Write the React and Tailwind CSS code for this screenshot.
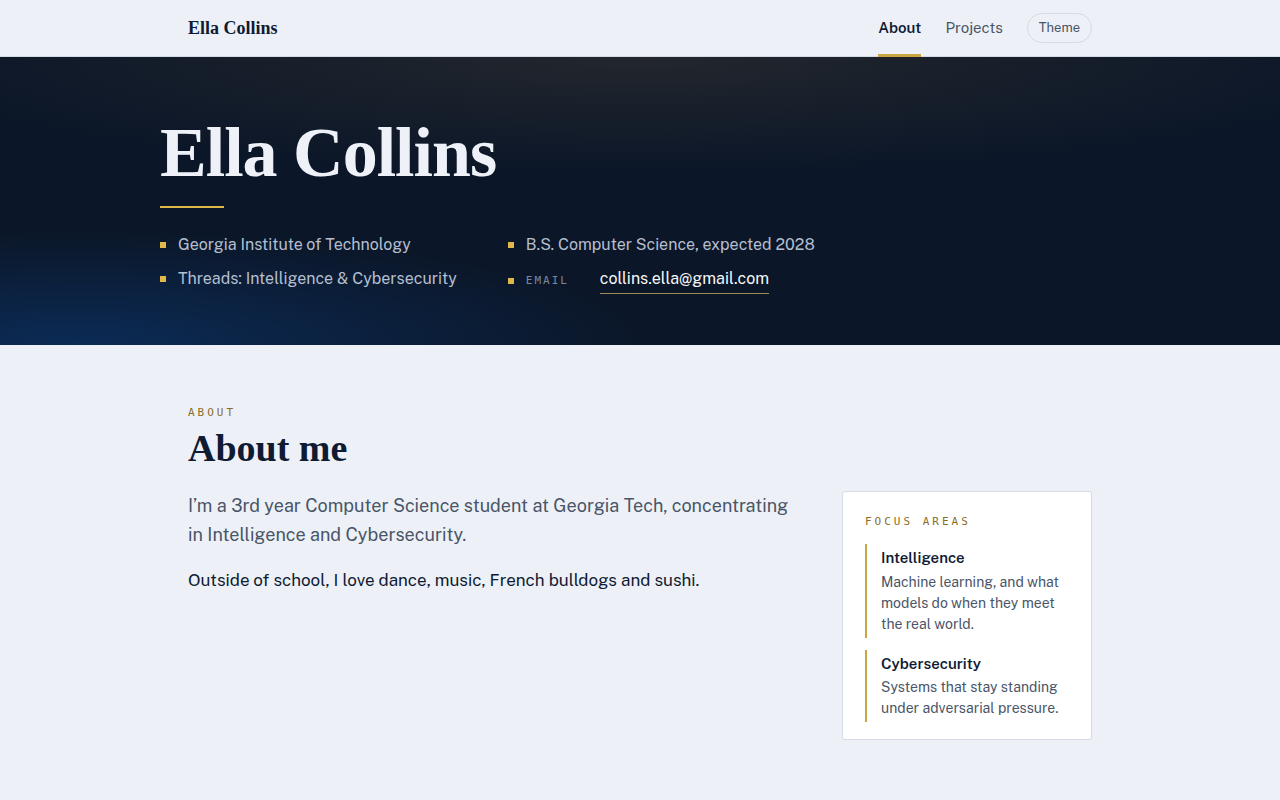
import React from 'react';

const sans = "font-['Public_Sans','Inter','Liberation_Sans',sans-serif]";
const serif = "font-['Liberation_Serif','DejaVu_Serif',serif]";
const mono = "font-['DejaVu_Sans_Mono','Liberation_Mono',monospace]";

function Bullet() {
  return <span className="h-[6px] w-[6px] shrink-0 bg-[#e0b84a]" />;
}

function HeroItem({ children }) {
  return (
    <li className="flex items-center gap-3 text-[16px] leading-6 text-[#b4bfd0]">
      <Bullet />
      {children}
    </li>
  );
}

function Focus({ title, children }) {
  return (
    <div className="border-l-2 border-[#c9a63f] py-[3px] pl-[14px]">
      <h3 className="text-[15px] font-semibold text-[#0f1b33]">{title}</h3>
      <p className="mt-[2px] text-[14px] leading-[21px] text-[#4a5568]">{children}</p>
    </div>
  );
}

export default function App() {
  return (
    <div className={`min-h-screen bg-[#edf1f7] ${sans}`}>
      <header className="h-[57px] border-b border-[#d5dbe4] bg-[#edf1f7]">
        <div className="mx-auto flex h-full max-w-[960px] items-center justify-between px-7">
          <a className={`${serif} text-[18px] font-bold text-[#0f1b33]`}>Ella Collins</a>
          <nav className="flex h-full items-center gap-6 text-[15px]">
            <a className="relative flex h-full items-center font-semibold text-[#0f1b33]">
              About
              <span className="absolute bottom-[-1px] left-0 h-[3px] w-full bg-[#c9a63f]" />
            </a>
            <a className="text-[#4a5568]">Projects</a>
            <button className="rounded-full border border-[#d5dbe4] px-[11px] py-[4px] text-[13px] text-[#4a5568]">
              Theme
            </button>
          </nav>
        </div>
      </header>

      <section className="relative overflow-hidden bg-[#0b1628]">
        <div className="pointer-events-none absolute inset-0 bg-[radial-gradient(ellipse_60%_40%_at_50%_0%,#23272d_0%,rgba(11,22,40,0)_100%)]" />
        <div className="pointer-events-none absolute inset-0 bg-[radial-gradient(ellipse_45%_40%_at_6%_100%,#0b2b55_0%,rgba(11,22,40,0)_100%)]" />
        <div className="relative mx-auto max-w-[960px] pb-[51px] pt-[56px]">
          <h1 className={`${serif} text-[70px] font-bold leading-[80px] tracking-[-1px] text-[#eef2f8]`}>
            Ella Collins
          </h1>
          <div className="mt-[13px] h-[2px] w-16 bg-[#e0b84a]" />
          <div className="mt-[25px] flex gap-[51px]">
            <ul className="flex flex-col gap-[10px]">
              <HeroItem>Georgia Institute of Technology</HeroItem>
              <HeroItem>Threads: Intelligence &amp; Cybersecurity</HeroItem>
            </ul>
            <ul className="flex flex-col gap-[10px]">
              <HeroItem>B.S. Computer Science, expected 2028</HeroItem>
              <li className="flex items-center gap-3 text-[16px] leading-6">
                <Bullet />
                <span className={`${mono} w-[62px] text-[11px] tracking-[2px] text-[#7d889b]`}>EMAIL</span>
                <a className="border-b border-[#a08a55] pb-[2px] text-[#f4f6fa]">collins.ella@gmail.com</a>
              </li>
            </ul>
          </div>
        </div>
      </section>

      <main className="mx-auto max-w-[960px] px-7 pb-16 pt-[60px]">
        <p className={`${mono} text-[11px] tracking-[3px] text-[#8a6d1f]`}>ABOUT</p>
        <h2 className={`${serif} mt-[3px] text-[38px] font-bold leading-[46px] text-[#0f1b33]`}>About me</h2>
        <div className="mt-[20px] flex items-start justify-between">
          <div className="w-[612px]">
            <p className="text-[18px] leading-[29px] text-[#4a5568]">
              I’m a 3rd year Computer Science student at Georgia Tech, concentrating in Intelligence and
              Cybersecurity.
            </p>
            <p className="mt-[17px] text-[17px] leading-[28px] text-[#0f1b33]">
              Outside of school, I love dance, music, French bulldogs and sushi.
            </p>
          </div>
          <aside className="w-[250px] rounded-[3px] border border-[#d5dbe4] bg-white px-[22px] pb-[17px] pt-[22px]">
            <p className={`${mono} text-[11px] tracking-[3px] text-[#8a6d1f]`}>FOCUS AREAS</p>
            <div className="mt-[14px] flex flex-col gap-[12px]">
              <Focus title="Intelligence">
                Machine learning, and what models do when they meet the real world.
              </Focus>
              <Focus title="Cybersecurity">Systems that stay standing under adversarial pressure.</Focus>
            </div>
          </aside>
        </div>
      </main>
    </div>
  );
}
